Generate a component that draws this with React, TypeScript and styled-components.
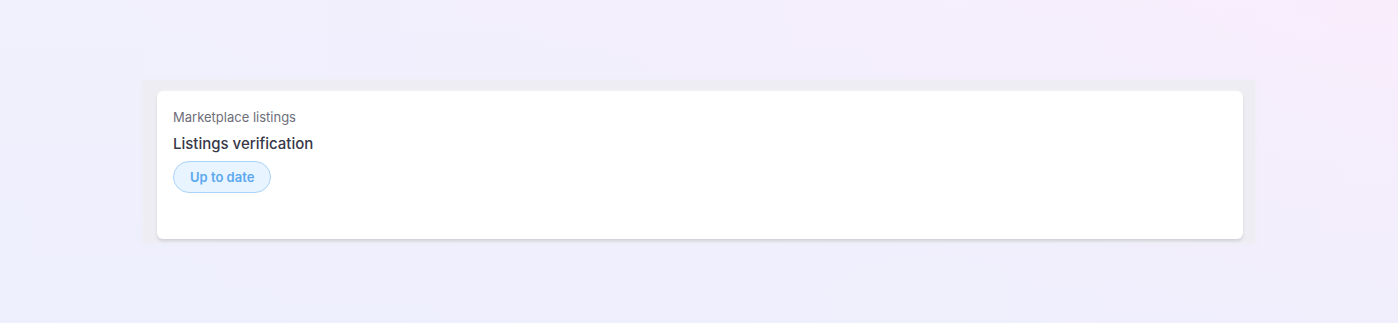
import React from "react";
import styled, { createGlobalStyle } from "styled-components";

const GlobalStyle = createGlobalStyle`
    html, body {
        margin: 0;
        padding: 0;
    }
    body {
        font-family: Inter, "Noto Sans", sans-serif;
        background: #f1f0fd;
        min-height: 100vh;
    }
`;

const Page = styled.div`
    width: 1398px;
    height: 323px;
    box-sizing: border-box;
    padding: 80px 143px 0 143px;
    background:
        linear-gradient(180deg, rgba(255, 255, 255, 0) 0%, rgba(236, 240, 253, 0.6) 100%),
        linear-gradient(90deg, #f1f0fd 0%, #f4effd 55%, #f9edfc 100%);
`;

const Shell = styled.div`
    background: rgba(236, 236, 241, 0.85);
    padding: 11px 12px 4px 14px;
    box-shadow: 0 0 5px rgba(236, 236, 241, 0.7);
`;

const Card = styled.section`
    background: #ffffff;
    border-radius: 6px;
    height: 148px;
    box-sizing: border-box;
    padding: 17px 16px;
    box-shadow: 0 2px 3px rgba(150, 150, 165, 0.35), 0 0 4px rgba(246, 246, 250, 0.9);
    display: flex;
    flex-direction: column;
    align-items: flex-start;
`;

const Eyebrow = styled.div`
    font-size: 13px;
    line-height: 18px;
    color: #6e6e7a;
`;

const Title = styled.h2`
    margin: 8px 0 0;
    font-size: 15px;
    line-height: 20px;
    font-weight: 500;
    color: #373849;
`;

const Badge = styled.span<{ tone?: "info" }>`
    margin-top: 7px;
    display: inline-flex;
    align-items: center;
    justify-content: center;
    height: 32px;
    box-sizing: border-box;
    padding: 0 16px;
    border-radius: 16px;
    border: 1px solid #abd4f8;
    background: #e8f4ff;
    color: #5ba8ef;
    font-size: 13px;
    font-weight: 600;
`;

export default function App() {
    return (
        <>
            <GlobalStyle />
            <Page>
                <Shell>
                    <Card>
                        <Eyebrow>Marketplace listings</Eyebrow>
                        <Title>Listings verification</Title>
                        <Badge tone="info">Up to date</Badge>
                    </Card>
                </Shell>
            </Page>
        </>
    );
}
